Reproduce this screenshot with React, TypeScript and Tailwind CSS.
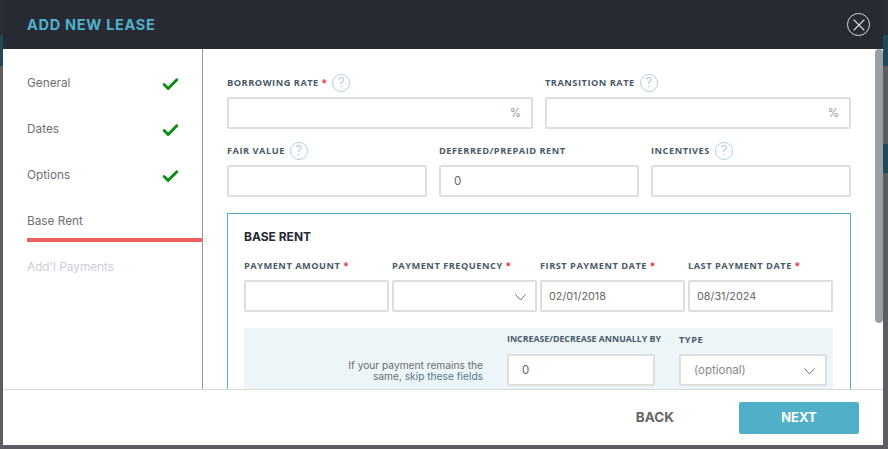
import { Check, X } from "lucide-react";

const labelClass = "font-['Open_Sans',sans-serif] text-[9.25px] leading-[14px] font-bold tracking-[0.5px] text-[#4a5a68] uppercase whitespace-nowrap";
const boxClass = "h-8 bg-white border-2 border-[#dedede] rounded-[2px] flex items-center pt-[2px] text-[#666] font-['Inter',sans-serif]";

function Help() {
  return (
    <span className="w-[18px] h-[18px] rounded-full border border-[#b5d0e0] flex items-center justify-center text-[13px] text-[#9dbccd] font-['Inter',sans-serif] font-light leading-none">
      ?
    </span>
  );
}

function Label({ text, required, help }: { text: string; required?: boolean; help?: boolean }) {
  return (
    <div className="h-[17px] mb-1.5 flex items-center gap-[5px]">
      <span className={labelClass}>
        {text}
        {required && <span className="text-[#e5343a]"> *</span>}
      </span>
      {help && <Help />}
    </div>
  );
}

function Chevron() {
  return (
    <svg width="11" height="7" viewBox="0 0 11 7" fill="none" className="shrink-0">
      <path d="M0.5 0.5 L5.5 6 L10.5 0.5" stroke="#5d7480" strokeWidth="1" />
    </svg>
  );
}

function Step({ name, done, active, muted }: { name: string; done?: boolean; active?: boolean; muted?: boolean }) {
  return (
    <div className="h-[46px] relative flex items-center justify-between pl-6 pr-[22px]">
      <span className={`font-['Inter',sans-serif] text-[11.8px] ${muted ? "text-[#c9ced6]" : "text-[#707070]"}`}>{name}</span>
      {done && <Check size={19} strokeWidth={3.6} className="text-[#0b8a13]" />}
      {active && <div className="absolute left-6 right-0 top-[39px] h-1 bg-[#ee6160]" />}
    </div>
  );
}

export default function App() {
  return (
    <div className="relative w-[888px] h-[449px] overflow-hidden bg-[#5c5c62]">
      {/* page behind the overlay */}
      <div className="h-[35px] bg-[#2a2d36]" />
      <div className="h-[31px] bg-[#1c4a58]" />
      <div className="absolute right-0 top-[144px] w-[5px] h-[29px] bg-[#1c4a58]" />

      <div className="absolute left-[3px] top-0 w-[880px] h-[445px] flex flex-col bg-white">
        <div className="h-[49px] shrink-0 bg-[#272a33] flex items-center justify-between pl-6 pr-[13px]">
          <span className="font-['Inter',sans-serif] text-[14.5px] tracking-[0.7px] font-bold text-[#4fb0cc]">ADD NEW LEASE</span>
          <span className="w-[23px] h-[23px] rounded-full border-[1.5px] border-[#dcdcdc] flex items-center justify-center">
            <X size={20} strokeWidth={1.3} className="text-[#dcdcdc]" />
          </span>
        </div>

        <div className="relative flex-1 min-h-0 flex overflow-hidden">
          <div className="w-[200px] shrink-0 border-r border-[#999] pt-3">
            <Step name="General" done />
            <Step name="Dates" done />
            <Step name="Options" done />
            <Step name="Base Rent" active />
            <Step name="Add'l Payments" muted />
          </div>

          <div className="flex-1 pl-6 pr-6 pt-[25px]">
            <div className="grid grid-cols-2 gap-x-3 w-[624px]">
              <div>
                <Label text="Borrowing Rate" required help />
                <div className={`${boxClass} justify-end pr-[10px] text-[11.5px] text-[#999]`}>%</div>
              </div>
              <div>
                <Label text="Transition Rate" help />
                <div className={`${boxClass} justify-end pr-[10px] text-[11.5px] text-[#999]`}>%</div>
              </div>
            </div>

            <div className="grid grid-cols-3 gap-x-3 w-[624px] mt-[13px]">
              <div>
                <Label text="Fair Value" help />
                <div className={boxClass} />
              </div>
              <div>
                <Label text="Deferred/Prepaid Rent" />
                <div className={`${boxClass} pl-[13px] text-[11.5px]`}>0</div>
              </div>
              <div>
                <Label text="Incentives" help />
                <div className={boxClass} />
              </div>
            </div>

            <div className="w-[624px] h-[300px] mt-4 border border-[#52afc8] pt-[15px] pl-4 pr-[17px]">
              <div className="font-['Inter',sans-serif] text-[12px] leading-[16px] font-bold text-[#272a33]">BASE RENT</div>
              <div className="grid grid-cols-4 gap-x-[3px] mt-3">
                <div>
                  <Label text="Payment Amount" required />
                  <div className={boxClass} />
                </div>
                <div>
                  <Label text="Payment Frequency" required />
                  <div className={`${boxClass} justify-end pr-[9px]`}>
                    <Chevron />
                  </div>
                </div>
                <div>
                  <Label text="First Payment Date" required />
                  <div className={`${boxClass} pl-[7px] text-[10.8px]`}>02/01/2018</div>
                </div>
                <div>
                  <Label text="Last Payment Date" required />
                  <div className={`${boxClass} pl-[7px] text-[10.8px]`}>08/31/2024</div>
                </div>
              </div>

              <div className="mt-4 h-[90px] bg-[#ecf5f8] flex pt-[3px]">
                <div className="w-[239px] pt-[29px] text-right font-['Inter',sans-serif] text-[10.2px] leading-[11px] text-[#6c6c70]">
                  If your payment remains the
                  <br />
                  same, <span className="text-[#55788a]">skip these fields</span>
                </div>
                <div className="w-[148px] ml-6">
                  <div className="h-[17px] mb-1.5 flex items-center font-['Open_Sans',sans-serif] text-[8.8px] font-bold text-[#4a5a68] whitespace-nowrap">
                    INCREASE/DECREASE ANNUALLY BY
                  </div>
                  <div className={`${boxClass} pl-[13px] text-[11.5px]`}>0</div>
                </div>
                <div className="w-[148px] ml-6">
                  <Label text="Type" />
                  <div className={`${boxClass} justify-between pl-[13px] pr-[10px] text-[11.5px] text-[#888]`}>
                    (optional)
                    <Chevron />
                  </div>
                </div>
              </div>
            </div>
          </div>

          <div className="absolute right-0 top-0 w-2 h-[274px] rounded-full bg-[#9a9fa1]" />
        </div>

        <div className="h-14 shrink-0 border-t border-[#d8d8d8] flex items-center justify-end pr-6">
          <span className="font-['Inter',sans-serif] text-[13.5px] font-bold text-[#666] mr-[65px]">BACK</span>
          <button className="w-[120px] h-8 rounded-[2px] bg-[#52afc8] text-white font-['Inter',sans-serif] text-[13px] font-bold">NEXT</button>
        </div>
      </div>
    </div>
  );
}
